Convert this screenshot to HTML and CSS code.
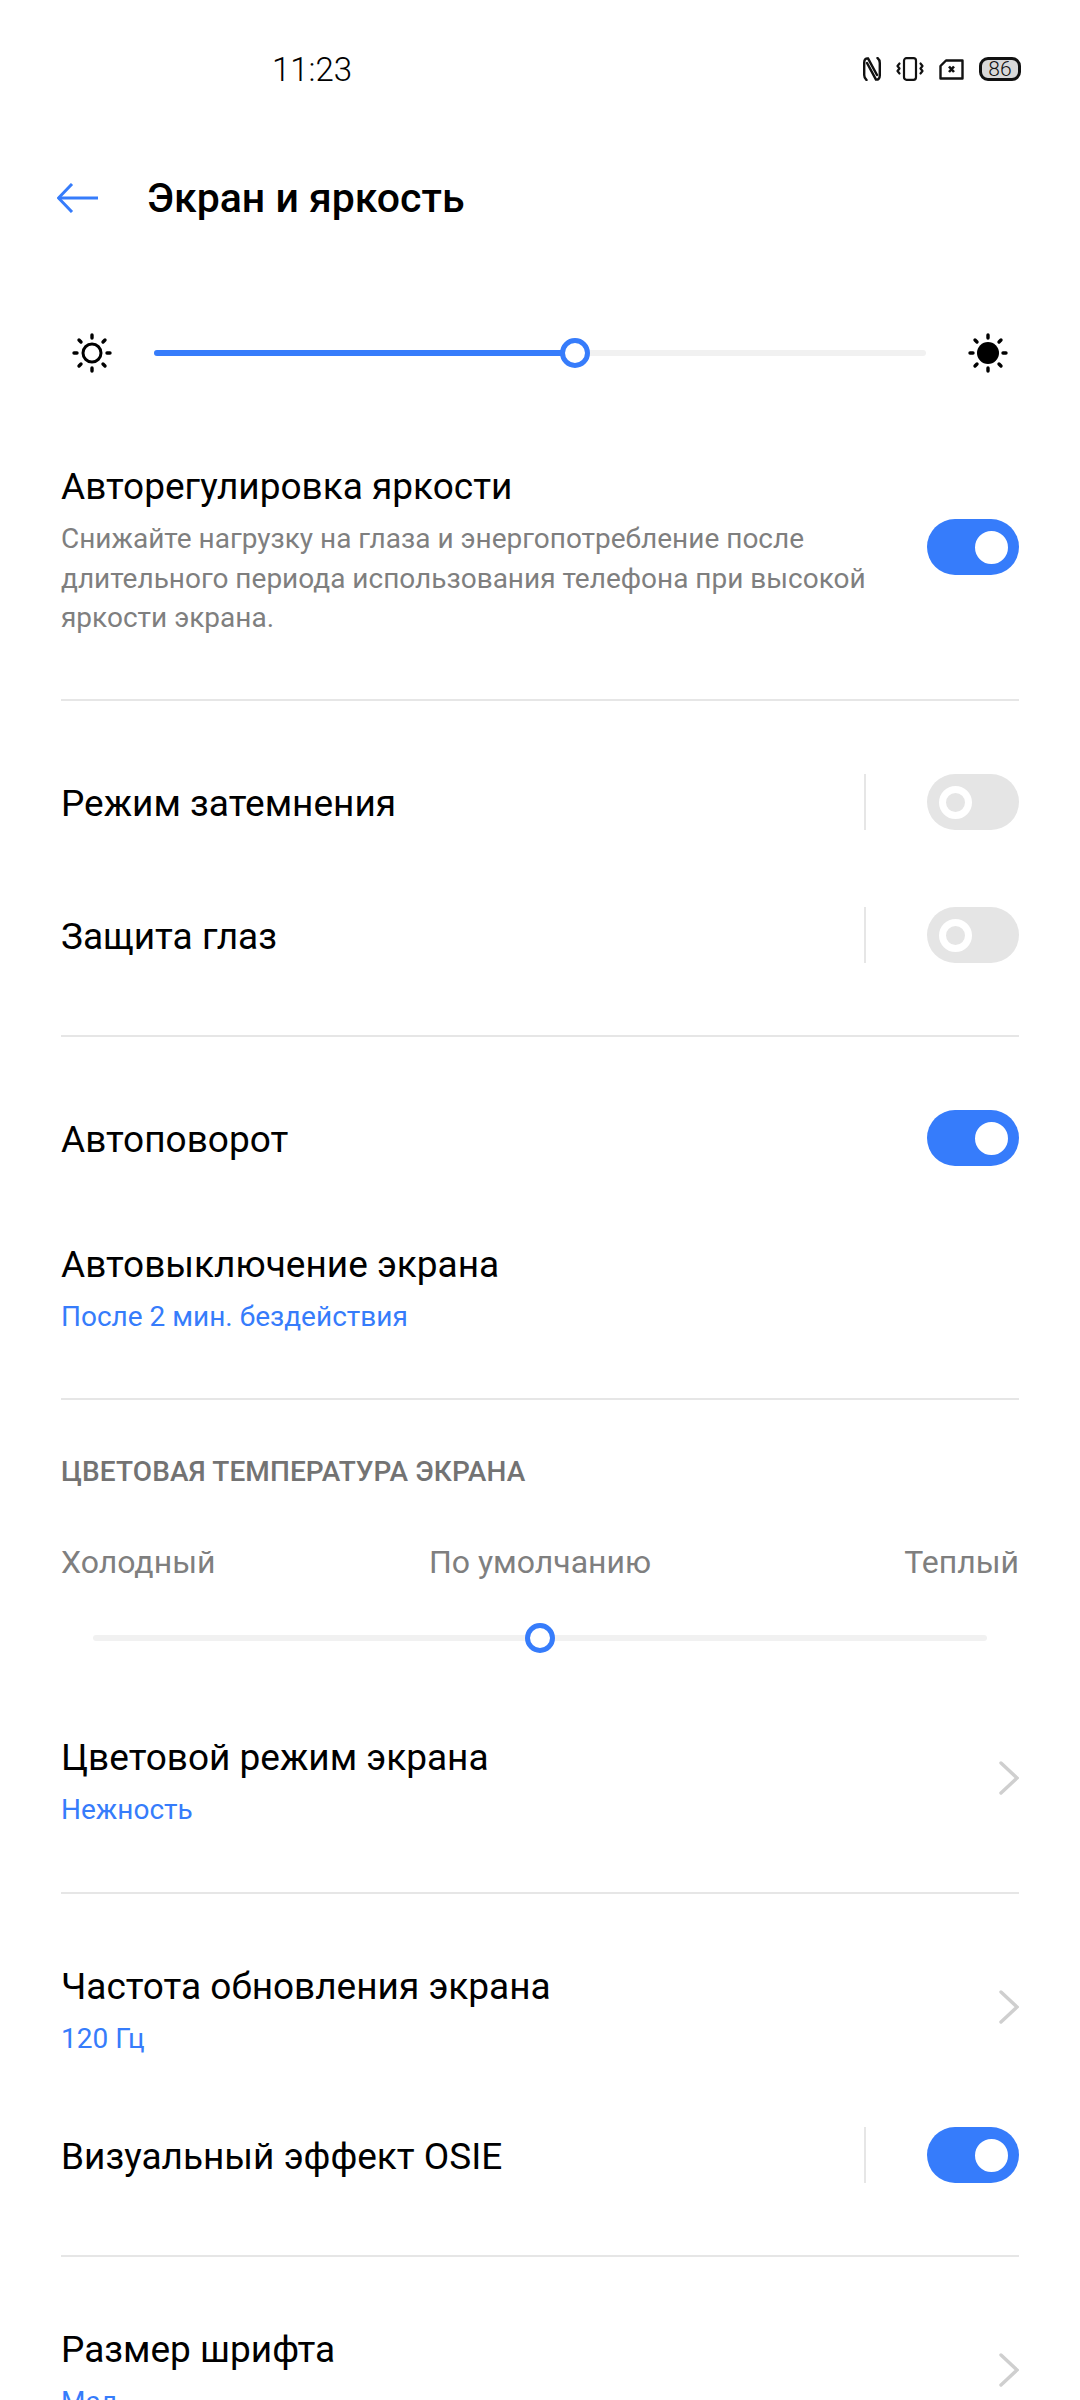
FILE: index.html
```html
<!DOCTYPE html>
<html lang="ru">
<head>
    <meta charset="utf-8">
    <title>Экран и яркость</title>
    <link rel="stylesheet" href="styles.css">
</head>
<body>
<div class="page">
    <div class="status">
        <span class="time">11:23</span>
        <div class="status-icons">
            <svg class="ic-nfc" width="18" height="24" viewBox="0 0 18 24" fill="none" stroke="#111" stroke-width="2.4" stroke-linecap="round"><path d="M3.5 23C1.6 21.5 1.2 20 1.2 18V5.5C1.2 2.5 3 1 5 1.4L14 18"/><path d="M14.5 1C16.4 2.5 16.8 4 16.8 6V18.5C16.8 21.5 15 23 13 22.6L4 6"/></svg>
            <svg class="ic-vib" width="28" height="24" viewBox="0 0 28 24" fill="none" stroke="#111" stroke-width="2.2" stroke-linecap="round" stroke-linejoin="round"><rect x="8" y="1.2" width="12" height="21.6" rx="2.5"/><path d="M3.5 6.5L1.5 9L3.5 11.5L1.5 14L3.5 16.5"/><path d="M24.5 6.5L26.5 9L24.5 11.5L26.5 14L24.5 16.5"/></svg>
            <svg class="ic-sim" width="25" height="21" viewBox="0 0 25 21" fill="none" stroke="#111" stroke-width="2.4" stroke-linejoin="round"><path d="M7 1.5H23.5V19.5H1.5V7Z"/><path d="M10 7.5L15 13M15 7.5L10 13" stroke-width="2.6"/></svg>
            <div class="battery"><span class="battery-num">86</span></div>
        </div>
    </div>

    <div class="topbar">
        <svg class="back" width="41" height="30" viewBox="0 0 41 30" fill="none" stroke="#367cfb" stroke-width="3"><path d="M15 1L1.5 15L15 29"/><path d="M1.5 15H41"/></svg>
        <h1 class="title">Экран и яркость</h1>
    </div>

    <div class="brightness">
        <svg class="sun" width="40" height="40" viewBox="0 0 40 40" fill="none" stroke="#000" stroke-width="3.4" stroke-linecap="round"><circle cx="20" cy="20" r="9" stroke-width="3"/><path d="M20 2V5M20 35V38M2 20H5M35 20H38M7 7L9 9M31 31L33 33M33 7L31 9M9 31L7 33"/></svg>
        <div class="track track-main">
            <div class="fill"></div>
            <div class="thumb thumb-main"></div>
        </div>
        <svg class="sun" width="40" height="40" viewBox="0 0 40 40" fill="#000" stroke="#000" stroke-width="3.4" stroke-linecap="round"><circle cx="20" cy="20" r="11" stroke="none"/><path d="M20 2V5M20 35V38M2 20H5M35 20H38M7 7L9 9M31 31L33 33M33 7L31 9M9 31L7 33"/></svg>
    </div>

    <section class="group group-auto">
        <div class="row-desc">
            <div class="text">
                <div class="name">Авторегулировка яркости</div>
                <p class="desc">Снижайте нагрузку на глаза и энергопотребление после длительного периода использования телефона при высокой яркости экрана.</p>
            </div>
            <div class="switch on switch-up"></div>
        </div>
    </section>

    <section class="group group-dim">
        <div class="row">
            <div class="name">Режим затемнения</div>
            <div class="sep"></div>
            <div class="switch"></div>
        </div>
        <div class="row">
            <div class="name">Защита глаз</div>
            <div class="sep"></div>
            <div class="switch"></div>
        </div>
    </section>

    <section class="group group-rotate">
        <div class="row">
            <div class="name">Автоповорот</div>
            <div class="switch on"></div>
        </div>
        <div class="row-sub">
            <div class="text">
                <div class="name">Автовыключение экрана</div>
                <div class="value">После 2 мин. бездействия</div>
            </div>
        </div>
    </section>

    <section class="group group-color">
        <div class="label">ЦВЕТОВАЯ ТЕМПЕРАТУРА ЭКРАНА</div>
        <div class="temps">
            <span>Холодный</span>
            <span class="temp-mid">По умолчанию</span>
            <span class="temp-end">Теплый</span>
        </div>
        <div class="track track-temp">
            <div class="thumb thumb-temp"></div>
        </div>
        <div class="row-sub row-mode">
            <div class="text">
                <div class="name">Цветовой режим экрана</div>
                <div class="value">Нежность</div>
            </div>
            <svg class="chev" width="20" height="34" viewBox="0 0 20 34" fill="none" stroke="#cfcfcf" stroke-width="3.4" stroke-linecap="round"><path d="M2 2L18 17L2 32"/></svg>
        </div>
    </section>

    <section class="group group-rate">
        <div class="row-sub">
            <div class="text">
                <div class="name">Частота обновления экрана</div>
                <div class="value">120 Гц</div>
            </div>
            <svg class="chev" width="20" height="34" viewBox="0 0 20 34" fill="none" stroke="#cfcfcf" stroke-width="3.4" stroke-linecap="round"><path d="M2 2L18 17L2 32"/></svg>
        </div>
        <div class="row row-osie">
            <div class="name">Визуальный эффект OSIE</div>
            <div class="sep"></div>
            <div class="switch on"></div>
        </div>
    </section>

    <section class="group group-last">
        <div class="row-sub">
            <div class="text">
                <div class="name">Размер шрифта</div>
                <div class="value">Мал.</div>
            </div>
            <svg class="chev" width="20" height="34" viewBox="0 0 20 34" fill="none" stroke="#cfcfcf" stroke-width="3.4" stroke-linecap="round"><path d="M2 2L18 17L2 32"/></svg>
        </div>
    </section>
</div>
</body>
</html>
```

FILE: styles.css
```css
*{
    box-sizing: border-box;
}
body{
    margin: 0;
    background-color: white;
    font-family: Roboto, "Noto Sans", sans-serif;
    color: black;
}
.page{
    width: 1080px;
    height: 2400px;
    overflow: hidden;
}

/* status bar */
.status{
    height: 138px;
    display: flex;
    align-items: center;
    justify-content: space-between;
    padding: 0 59px 0 272px;
}
.time{
    font-size: 33px;
    font-weight: 300;
    letter-spacing: 0;
}
.status-icons{
    display: flex;
    align-items: center;
    gap: 15px;
}
.battery{
    width: 42px;
    height: 24px;
    border: 3px solid #111;
    border-radius: 9px;
    background-color: #d9d9d9;
    display: flex;
    align-items: center;
    justify-content: center;
}
.battery-num{
    font-size: 21px;
    font-weight: 300;
    line-height: 18px;
    color: #111;
}

/* title */
.topbar{
    height: 120px;
    display: flex;
    align-items: center;
    padding-left: 57px;
}
.back{
    margin-right: 49px;
}
.title{
    margin: 0;
    font-size: 41px;
    font-weight: 500;
}

/* sliders */
.brightness{
    height: 205px;
    display: flex;
    align-items: center;
    padding: 0 72px 16px 72px;
}
.track{
    height: 6px;
    border-radius: 3px;
    background-color: #f1f1f1;
    position: relative;
}
.track-main{
    flex: 1;
    margin: 0 42px;
}
.fill{
    width: 421px;
    height: 6px;
    border-radius: 3px;
    background-color: #367cfb;
}
.thumb{
    position: absolute;
    top: -12px;
    width: 30px;
    height: 30px;
    border: 5px solid #367cfb;
    border-radius: 50%;
    background-color: white;
}
.thumb-main{
    left: 406px;
}
.thumb-temp{
    left: 432px;
}

/* groups */
.group{
    margin: 0 61px;
    border-bottom: 2px solid #e6e6e6;
}
.group-auto{
    padding-bottom: 61px;
}
.group-dim{
    padding: 35px 0 33px;
}
.group-rotate{
    padding: 35px 0 61px;
}
.group-color{
    padding-top: 50px;
    padding-bottom: 62px;
}
.group-rate{
    padding: 69px 0 33px;
}
.group-last{
    padding-top: 69px;
    border-bottom: none;
}

/* rows */
.row{
    height: 133px;
    display: flex;
    align-items: center;
}
.row .name{
    padding-top: 3px;
}
.row-desc, .row-sub{
    display: flex;
    align-items: center;
    justify-content: space-between;
}
.row-sub{
    margin-top: 36px;
}
.group-rate .row-sub, .group-last .row-sub{
    margin-top: 0;
}
.group-color .row-mode{
    margin-top: 93px;
}
.row-osie{
    margin-top: 30px;
}
.name{
    font-size: 37px;
    line-height: 48px;
    flex: 1;
}
.desc{
    width: 810px;
    margin: 8px 0 0;
    font-size: 28px;
    line-height: 39.5px;
    color: #7f7f7f;
}
.value{
    margin-top: 8px;
    font-size: 28px;
    line-height: 40px;
    color: #367cfb;
}
.switch-up{
    margin-bottom: 6px;
}
.sep{
    width: 2px;
    height: 56px;
    margin-right: 61px;
    background-color: #e6e6e6;
}
.chev{
    flex: none;
    margin-bottom: 8px;
}

/* toggle */
.switch{
    flex: none;
    width: 92px;
    height: 56px;
    border-radius: 28px;
    background-color: #e5e5e5;
    padding: 0 11.5px;
    display: flex;
    align-items: center;
    justify-content: flex-start;
}
.switch::after{
    content: "";
    box-sizing: border-box;
    flex: none;
    width: 33px;
    height: 33px;
    border: 7px solid white;
    border-radius: 50%;
}
.switch.on{
    background-color: #367cfb;
    justify-content: flex-end;
}
.switch.on::after{
    background-color: white;
}

/* colour temperature */
.label{
    font-size: 28px;
    line-height: 44px;
    font-weight: 500;
    letter-spacing: 0.1px;
    color: #737373;
}
.temps{
    display: grid;
    grid-template-columns: 1fr auto 1fr;
    margin-top: 46px;
    font-size: 32px;
    line-height: 44px;
    color: #7f7f7f;
}
.temp-end{
    text-align: right;
}
.track-temp{
    margin: 51px 32px 0;
}
```
